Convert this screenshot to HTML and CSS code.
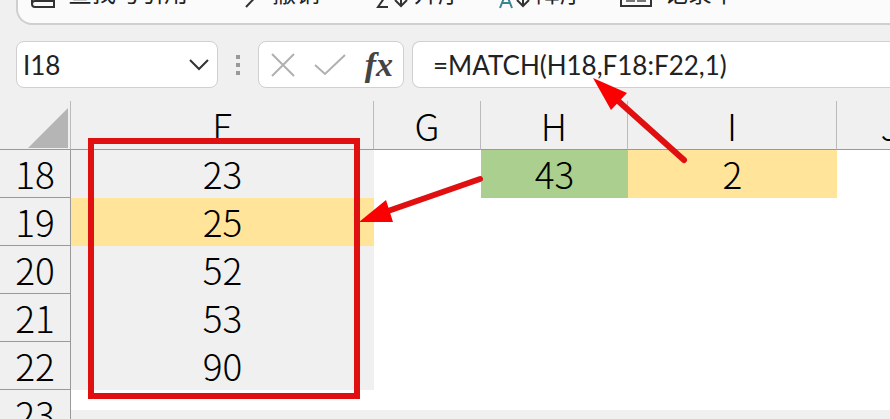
FILE: index.html
```html
<!DOCTYPE html>
<html lang="zh-CN">
<head>
  <meta charset="UTF-8">
  <meta name="viewport" content="width=device-width, initial-scale=1.0">
  <title>MATCH</title>
  <link rel="stylesheet" href="styles.css">
</head>
<body>

<div class="ribbon">
  <button class="tool lookup">
    <svg width="26" height="28" viewBox="0 0 26 28"><path d="M24 2v24H5a3 3 0 0 1-3-3V2M2 23a3 3 0 0 1 3-3h19" fill="none" stroke="#333" stroke-width="2"/></svg>
    <span>查找与引用</span>
  </button>
  <button class="tool undo">
    <svg width="24" height="28" viewBox="0 0 24 28"><path d="M2 26L22 5" fill="none" stroke="#333" stroke-width="2"/></svg>
    <span>撤销</span>
  </button>
  <button class="tool asc">
    <svg width="34" height="28" viewBox="0 0 34 28"><path d="M2 13h9L2 26h10M25 2v23M19 19l6 6 6-6" fill="none" stroke="#333" stroke-width="2"/></svg>
    <span>升序</span>
  </button>
  <button class="tool desc">
    <svg width="34" height="28" viewBox="0 0 34 28"><path d="M2 27L8 12l6 15M4 22h8" fill="none" stroke="#3c8397" stroke-width="2"/><path d="M25 2v23M19 19l6 6 6-6" fill="none" stroke="#333" stroke-width="2"/></svg>
    <span>降序</span>
  </button>
  <button class="tool form">
    <svg width="32" height="28" viewBox="0 0 32 28"><path d="M1 6h30v19H1z" fill="none" stroke="#333" stroke-width="2"/><path d="M6 12h8v8H6M18 12h7v8h-7z" fill="none" stroke="#777" stroke-width="2"/></svg>
    <span>记录单</span>
  </button>
</div>

<div class="formula-bar">
  <div class="name-box">
    <input type="text" class="cell-name" value="I18" aria-label="名称框">
    <button class="open" aria-label="展开">
      <svg width="20" height="12" viewBox="0 0 20 12"><path d="M1 1l9 9 9-9" fill="none" stroke="#333" stroke-width="2"/></svg>
    </button>
  </div>
  <div class="dots"><i></i><i></i><i></i></div>
  <div class="actions">
    <button aria-label="取消">
      <svg width="24" height="24" viewBox="0 0 24 24"><path d="M1 1l22 22M23 1L1 23" fill="none" stroke="#b0b0b0" stroke-width="2"/></svg>
    </button>
    <button aria-label="输入">
      <svg width="32" height="22" viewBox="0 0 32 22"><path d="M1 11l10 9L31 1" fill="none" stroke="#b0b0b0" stroke-width="2"/></svg>
    </button>
    <button class="fx">fx</button>
  </div>
  <input type="text" class="formula" value="=MATCH(H18,F18:F22,1)" aria-label="编辑栏">
</div>

<div class="sheet">
  <table>
    <colgroup>
      <col class="col-head"><col class="col-f"><col class="col-g"><col class="col-h"><col class="col-i"><col class="col-g">
    </colgroup>
    <thead>
      <tr>
        <th class="corner"><svg width="40" height="40" viewBox="0 0 40 40"><path d="M40 0v40H0z" fill="#b5b5b5"/></svg></th>
        <th>F</th><th>G</th><th>H</th><th>I</th><th>J</th>
      </tr>
    </thead>
    <tbody>
      <tr><th>18</th><td class="gray">23</td><td></td><td class="green">43</td><td class="yellow">2</td><td></td></tr>
      <tr><th>19</th><td class="yellow">25</td><td></td><td></td><td></td><td></td></tr>
      <tr><th>20</th><td class="gray">52</td><td></td><td></td><td></td><td></td></tr>
      <tr><th>21</th><td class="gray">53</td><td></td><td></td><td></td><td></td></tr>
      <tr><th>22</th><td class="gray">90</td><td></td><td></td><td></td><td></td></tr>
      <tr class="last"><th>23</th><td></td><td></td><td></td><td></td><td></td></tr>
    </tbody>
  </table>
</div>

<svg class="marks" width="890" height="419" viewBox="0 0 890 419">
  <rect x="91" y="141" width="266" height="255" fill="none" stroke="#e01010" stroke-width="6"/>
  <path d="M480 179L388 211M684 160L616 99" stroke="#e01010" stroke-width="6" stroke-linecap="round"/>
  <path d="M359 222L386 200 393 222zM593 78L627 93 611 110z" fill="#fb0000"/>
</svg>

</body>
</html>
```

FILE: styles.css
```css
* {
  box-sizing: border-box;
}
body {
  margin: 0;
  height: 100vh;
  overflow: hidden;
  position: relative;
  background-color: #f0f0f0;
  font-family: Lato, "Noto Sans CJK SC", sans-serif;
  color: #222;
}
button {
  padding: 0;
  border: 0;
  background: none;
  font: inherit;
  color: inherit;
  cursor: pointer;
}
svg {
  display: block;
}
input {
  border: 0;
  outline: 0;
  background: none;
  font: inherit;
  color: inherit;
}
.ribbon {
  display: flex;
  align-items: flex-end;
  height: 25px;
  margin-left: 16px;
  padding: 0 0 14px 12px;
  overflow: hidden;
  border: 2px solid #cfcfcf;
  border-top: 0;
  border-right: 0;
  border-radius: 0 0 0 16px;
  background-color: #fbfbfb;
}
.tool {
  display: flex;
  align-items: center;
  flex: none;
  gap: 12px;
  height: 28px;
  font-size: 24px;
  line-height: 24px;
  white-space: nowrap;
}
.tool span {
  padding-bottom: 4px;
}
.undo {
  margin-left: 56px;
  gap: 4px;
}
.asc,
.desc {
  gap: 4px;
}
.asc {
  margin-left: 56px;
}
.desc {
  margin-left: 36px;
}
.form {
  margin-left: 36px;
}
.formula-bar {
  display: flex;
  align-items: center;
  height: 47px;
  margin: 16px 0 13px 16px;
  font-size: 26px;
}
.name-box,
.actions,
.formula {
  height: 47px;
  border: 1px solid #d0d0d0;
  border-radius: 8px;
  background-color: #fff;
}
.name-box {
  display: flex;
  align-items: center;
  width: 202px;
  padding: 0 8px 0 6px;
}
.cell-name {
  flex: 1;
  min-width: 0;
  padding: 0;
}
.dots {
  display: grid;
  gap: 4px;
  margin: 0 18px;
}
.dots i {
  width: 4px;
  height: 4px;
  background-color: #999;
}
.actions {
  display: flex;
  align-items: center;
  justify-content: space-between;
  width: 146px;
  padding: 0 10px 0 12px;
}
.fx {
  font: italic bold 34px/36px "Liberation Serif", serif;
  color: #444;
}
.formula {
  flex: 1;
  min-width: 0;
  margin-left: 8px;
  padding: 0 20px;
  border-right: 0;
  border-radius: 8px 0 0 8px;
}
.sheet {
  overflow: hidden;
}
table {
  table-layout: fixed;
  width: 944px;
  border-collapse: separate;
  border-spacing: 0;
  font-family: "Noto Sans CJK SC", sans-serif;
  font-size: 37px;
  line-height: 40px;
  text-align: center;
  color: #000;
}
.col-head {
  width: 71px;
}
.col-f {
  width: 303px;
}
.col-g {
  width: 107px;
}
.col-h {
  width: 147px;
}
.col-i {
  width: 209px;
}
th,
td {
  height: 48px;
  padding: 0 0 2px;
  font-weight: 300;
  background-color: #fff;
}
th {
  border-right: 1px solid #999;
  border-bottom: 1px solid #999;
  background-color: #f0f0f0;
}
thead th {
  height: 49px;
  padding: 0;
  border-right-color: #bbb;
}
thead .corner {
  padding: 5px 3px 0 28px;
}
.gray {
  background-color: #f0f0f0;
}
.green {
  background-color: #abcf8e;
}
.yellow {
  background-color: #ffe499;
}
.last td {
  background-image: linear-gradient(#fff 20px, #f0f0f0 20px);
}
.marks {
  position: absolute;
  top: 0;
  left: 0;
  pointer-events: none;
}
```
